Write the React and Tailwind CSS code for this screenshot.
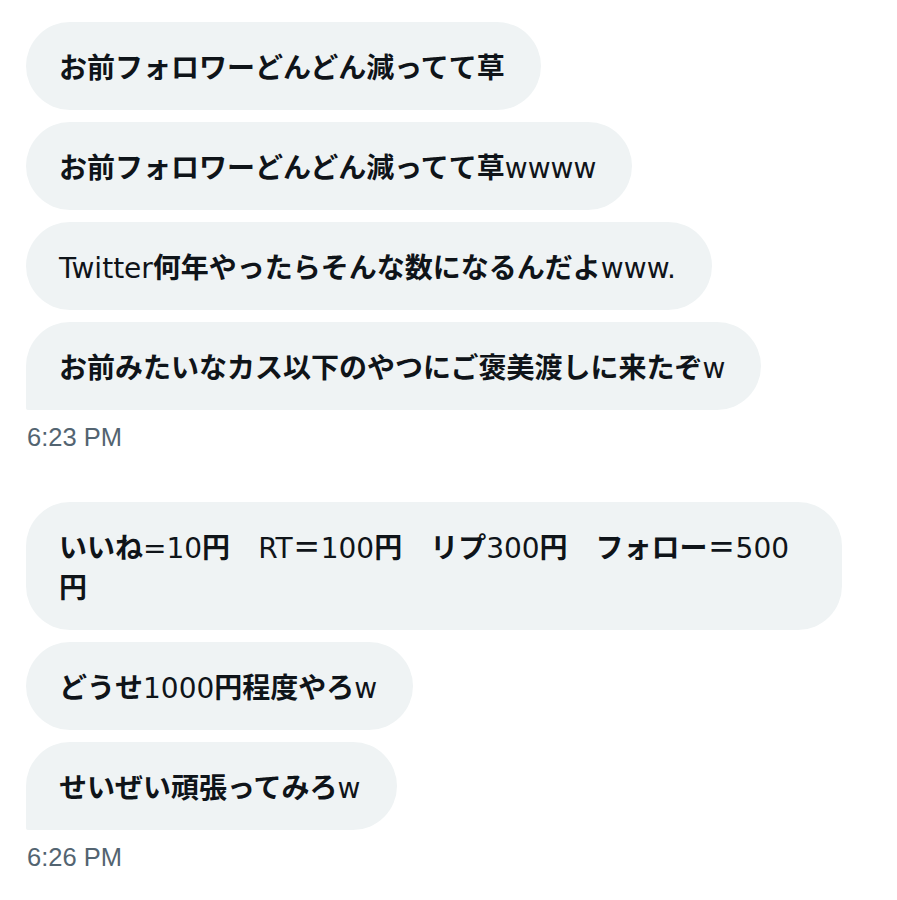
import React from "react";

const latin = { fontFamily: '"DejaVu Sans", "Noto Sans CJK JP", sans-serif' };
const cjk = { fontFamily: '"Noto Sans CJK JP", sans-serif' };
const timeFont = { fontFamily: '"Liberation Sans", Arial, sans-serif' };

function Rich({ text }) {
  const parts = text.match(/[\x00-\x7F]+|[^\x00-\x7F]+/g) || [];
  return parts.map((p, i) =>
    /^[\x00-\x7F]/.test(p) ? (
      <span key={i} className="font-normal leading-none" style={latin}>{p}</span>
    ) : (
      <span key={i} className="font-bold leading-none" style={cjk}>{p}</span>
    )
  );
}

function Bubble({ children, last, className = "" }) {
  return (
    <div
      className={`self-start bg-[#eff3f4] text-[#0f1419] text-[28px] leading-[40px] pl-[33px] pr-[36px] py-[24px] rounded-[44px] ${last ? "rounded-bl-[2px]" : ""} ${className}`}
      style={cjk}
    >
      {children}
    </div>
  );
}

function Time({ children }) {
  return (
    <div className="mt-[12px] pl-[1px] text-[25.5px] leading-[30px] text-[#536471]" style={timeFont}>
      {children}
    </div>
  );
}

export default function App() {
  return (
    <div className="w-[897px] h-[900px] bg-white pl-[26px] pt-[22px] flex flex-col">
      <div className="flex flex-col gap-[12px]">
        <Bubble><Rich text="お前フォロワーどんどん減ってて草" /></Bubble>
        <Bubble><Rich text="お前フォロワーどんどん減ってて草wwww" /></Bubble>
        <Bubble><Rich text="Twitter何年やったらそんな数になるんだよwww." /></Bubble>
        <Bubble last><Rich text="お前みたいなカス以下のやつにご褒美渡しに来たぞw" /></Bubble>
      </div>
      <Time>6:23 PM</Time>
      <div className="flex flex-col gap-[12px] mt-[50px]">
        <Bubble className="w-[816px]">
          <Rich text="いいね=10円　RT＝100円　リプ300円　フォロー＝500" />
          <br />
          <Rich text="円" />
        </Bubble>
        <Bubble><Rich text="どうせ1000円程度やろw" /></Bubble>
        <Bubble last><Rich text="せいぜい頑張ってみろw" /></Bubble>
      </div>
      <Time>6:26 PM</Time>
    </div>
  );
}
